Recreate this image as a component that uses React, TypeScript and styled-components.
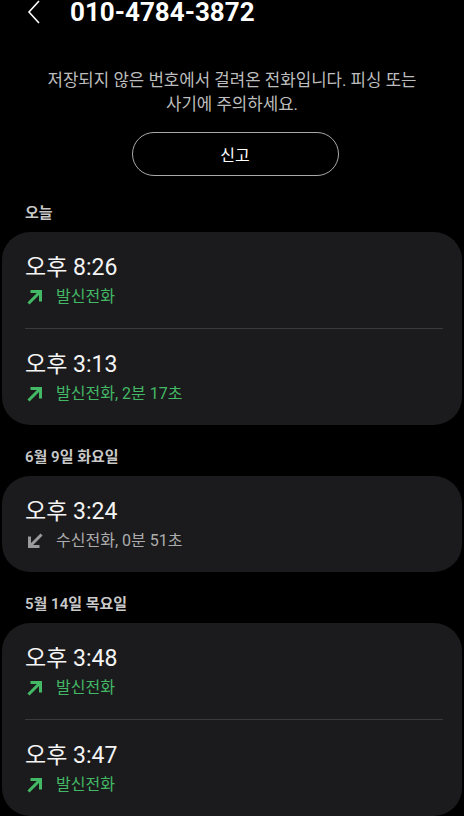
import { FC } from 'react';
import styled, { createGlobalStyle } from 'styled-components';

const GlobalStyle = createGlobalStyle`
	html, body {
		margin: 0;
		padding: 0;
		background: #000;
	}
	body {
		font-family: Roboto, "Noto Sans CJK KR", sans-serif;
		color: #fff;
		overflow: hidden;
	}
`;

const Screen = styled.div`
	width: 464px;
	height: 816px;
	background: #000;
	overflow: hidden;
`;

/* header is scrolled partly out of view */
const Header = styled.div`
	display: flex;
	align-items: center;
	height: 40px;
	margin-top: -8px;
	padding-left: 27px;
	gap: 27px;
`;

const BackButton = styled.div`
	display: flex;
	align-items: center;
	width: 16px;
	height: 26px;
`;

const Title = styled.h1`
	margin: 0;
	font-size: 26px;
	font-weight: 700;
	line-height: 40px;
	color: #fff;
`;

const Notice = styled.p`
	margin: 36px 0 0;
	padding: 0 20px;
	text-align: center;
	font-size: 16.8px;
	line-height: 24px;
	color: #bdbdbd;
`;

const ReportRow = styled.div`
	display: flex;
	justify-content: center;
	margin-top: 16px;
	padding-left: 6px;
`;

const ReportButton = styled.button`
	width: 207px;
	height: 44px;
	border-radius: 22px;
	border: 1.5px solid #a9a9a9;
	background: transparent;
	color: #fff;
	font-family: inherit;
	font-size: 16px;
	font-weight: 400;
`;

const SectionLabel = styled.div<{ $first?: boolean }>`
	margin: ${(p) => (p.$first ? '27px' : '22px')} 0 9px 25px;
	font-size: 15px;
	font-weight: 600;
	line-height: 20px;
	color: #c9c9c9;
`;

const Card = styled.div`
	margin: 0 2px;
	border-radius: 28px;
	background: #1b1b1d;
	overflow: hidden;
`;

const Divider = styled.div`
	height: 1px;
	margin: 0 19px 0 23px;
	background: #3a3a3c;
`;

const Row = styled.div`
	display: flex;
	flex-direction: column;
	gap: 3px;
	padding: 21px 23px 20px 23px;
`;

const Time = styled.div`
	font-size: 23px;
	line-height: 30px;
	color: #f4f4f4;
`;

const Detail = styled.div<{ $outgoing: boolean }>`
	display: flex;
	align-items: center;
	gap: 12px;
	font-size: 16px;
	line-height: 22px;
	color: ${(p) => (p.$outgoing ? '#43b865' : '#acacac')};
`;

const ArrowIcon = styled.svg`
	width: 18px;
	height: 18px;
	flex-shrink: 0;
	margin-left: 1px;
`;

type Call = { time: string; outgoing: boolean; duration?: string };

const CallRow: FC<{ call: Call }> = ({ call }) => (
	<Row>
		<Time>{call.time}</Time>
		<Detail $outgoing={call.outgoing}>
			{call.outgoing ? (
				<ArrowIcon viewBox="3 3 18 18" fill="#43b865">
					<path d="M7.5 5v3h6.4L4.4 17.5l2.1 2.1 9.5-9.5V16.5H19V5z" />
				</ArrowIcon>
			) : (
				<ArrowIcon viewBox="3 3 18 18" fill="#9a9a9a">
					<path d="M19.6 6.5L17.5 4.4 8 13.9V7.5H5V19h11.5v-3H10.1z" />
				</ArrowIcon>
			)}
			<span>
				{call.outgoing ? '발신전화' : '수신전화'}
				{call.duration ? `, ${call.duration}` : ''}
			</span>
		</Detail>
	</Row>
);

const groups: { label: string; calls: Call[] }[] = [
	{
		label: '오늘',
		calls: [
			{ time: '오후 8:26', outgoing: true },
			{ time: '오후 3:13', outgoing: true, duration: '2분 17초' }
		]
	},
	{
		label: '6월 9일 화요일',
		calls: [{ time: '오후 3:24', outgoing: false, duration: '0분 51초' }]
	},
	{
		label: '5월 14일 목요일',
		calls: [
			{ time: '오후 3:48', outgoing: true },
			{ time: '오후 3:47', outgoing: true }
		]
	}
];

const App: FC = () => (
	<>
		<GlobalStyle />
		<Screen>
			<Header>
				<BackButton>
					<svg width="14" height="24" viewBox="0 0 14 24">
						<path d="M12 1L2 12l10 11" fill="none" stroke="#fff" strokeWidth="1.6" />
					</svg>
				</BackButton>
				<Title>010-4784-3872</Title>
			</Header>

			<Notice>
				저장되지 않은 번호에서 걸려온 전화입니다. 피싱 또는
				<br />
				사기에 주의하세요.
			</Notice>

			<ReportRow>
				<ReportButton>신고</ReportButton>
			</ReportRow>

			{groups.map((g, gi) => (
				<div key={g.label}>
					<SectionLabel $first={gi === 0}>{g.label}</SectionLabel>
					<Card>
						{g.calls.map((c, i) => (
							<div key={c.time}>
								{i > 0 && <Divider />}
								<CallRow call={c} />
							</div>
						))}
					</Card>
				</div>
			))}
		</Screen>
	</>
);

export default App;
